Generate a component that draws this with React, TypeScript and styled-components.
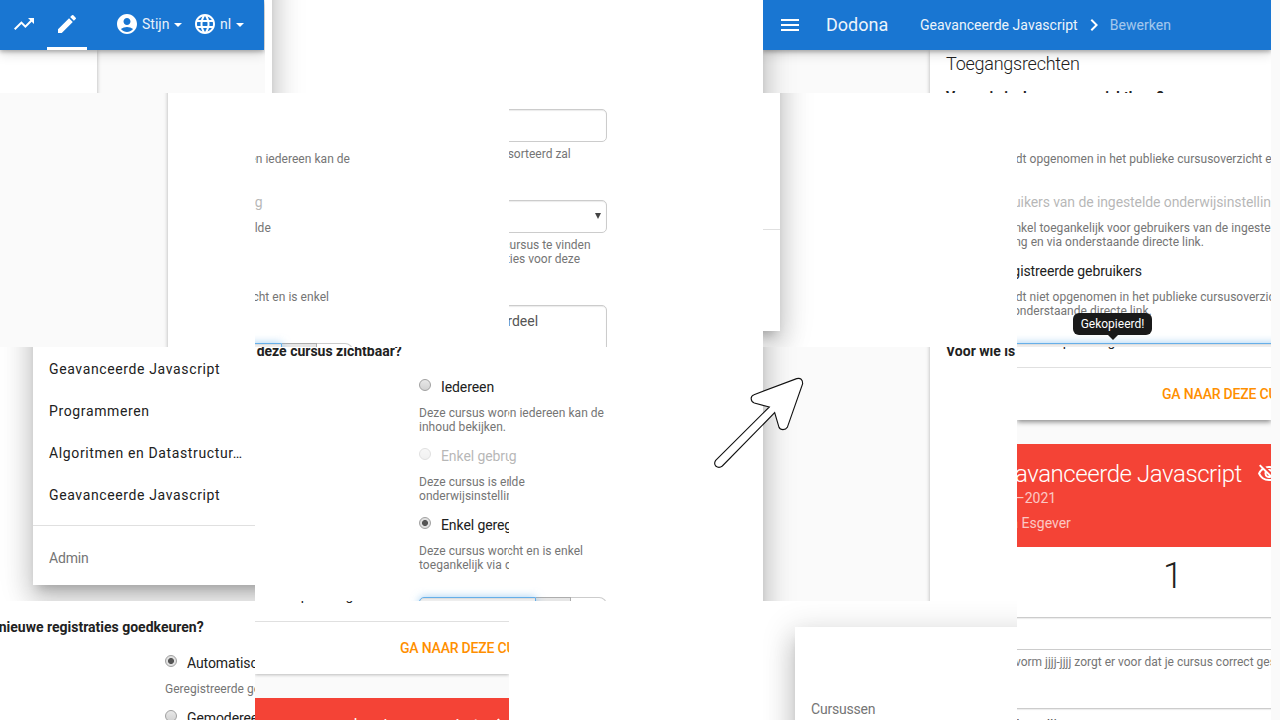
import React from "react";
import styled, { createGlobalStyle, css } from "styled-components";
import {
  MdAccountCircle,
  MdChevronRight,
  MdEdit,
  MdLanguage,
  MdMenu,
  MdOutlineVisibilityOff,
  MdTrendingUp,
} from "react-icons/md";

const Global = createGlobalStyle`
  *, *::before, *::after { box-sizing: border-box; }
  body {
    margin: 0;
    overflow: hidden;
    background: #fff;
    color: #212121;
    font: 14px/20px Roboto, "Liberation Sans", sans-serif;
  }
`;

const drawerShadow =
  "0 8px 10px -5px rgba(0,0,0,.2), 0 16px 24px 2px rgba(0,0,0,.14), 0 6px 30px 5px rgba(0,0,0,.12)";

const Page = styled.main`
  position: relative;
  width: 1280px;
  height: 720px;
  overflow: hidden;
  display: flex;
`;
const Mosaic = styled.div`
  width: 1271px;
  flex: none;
  display: flex;
  flex-direction: column;
`;
const Gutter = styled.div`
  flex: 1;
  background: #fafafa;
`;
const Row = styled.div<{ $h: number }>`
  display: flex;
  flex: none;
  height: ${(p) => p.$h}px;
`;
const Tile = styled.section<{ $w?: number; $grey?: boolean }>`
  flex: none;
  width: ${(p) => p.$w ?? 254}px;
  height: 100%;
  overflow: hidden;
  white-space: nowrap;
  background: ${(p) => (p.$grey ? "#fafafa" : "#fff")};
`;
const Bar = styled.nav`
  position: relative;
  display: flex;
  align-items: center;
  height: 50px;
  background: #1976d2;
  color: #fff;
  box-shadow: 0 2px 4px rgba(0, 0, 0, 0.26), 0 3px 12px rgba(0, 0, 0, 0.16);
  svg { flex: none; }
`;
const StatusBar = styled(Bar)`
  width: 264px;
  padding: 0 0 2px 12px;
`;
const ActiveTab = styled.span`
  display: flex;
  align-items: center;
  justify-content: center;
  width: 40px;
  height: 50px;
  margin: 2px 28px 0 11px;
  border-bottom: 3px solid #fff;
`;
const MenuLabel = styled.span<{ $w: number }>`
  width: ${(p) => p.$w}px;
  margin-left: 3px;
  opacity: 0.9;
`;
const Caret = styled.span`
  border: 4px solid transparent;
  border-top-color: #fff;
  border-bottom: 0;
  margin: 2px 11px 0 0;
`;
const Brand = styled.span`
  width: 94px;
  margin-left: 24px;
  font-size: 18px;
  opacity: 0.92;
`;
const Crumb = styled.span<{ $faded?: boolean }>`
  letter-spacing: 0.04px;
  opacity: ${(p) => (p.$faded ? 0.6 : 0.92)};
`;
const Below = styled.div`
  display: flex;
  height: 300px;
`;
const DrawerEdge = styled.div<{ $line?: boolean; $h?: number; $w?: number }>`
  flex: none;
  width: ${(p) => 200 + (p.$w ?? 0)}px;
  height: ${(p) => (p.$h ?? 600) + 120}px;
  margin: -120px 0 0 -200px;
  background: #fff;
  box-shadow: ${drawerShadow};
  padding-top: ${(p) => (p.$line ? 256 : 0)}px;
`;
const Rule = styled.div`
  height: 1px;
  background: #e0e0e0;
`;
const Card = styled.div<{ $ml?: number; $w?: number; $mt?: number }>`
  flex: none;
  width: ${(p) => p.$w ?? 500}px;
  margin-left: ${(p) => p.$ml ?? 0}px;
  margin-top: ${(p) => p.$mt ?? 0}px;
  height: 400px;
  background: #fff;
  box-shadow: 0 1px 4px rgba(0, 0, 0, 0.3);
`;
const CardHeading = styled.h2`
  margin: 2px 0 20px 16px;
  font-size: 18px;
  font-weight: 300;
  line-height: 24px;
  letter-spacing: -0.25px;
`;
const FieldLabel = styled.div<{ $ml?: number }>`
  margin-left: ${(p) => p.$ml ?? 0}px;
  font-weight: 700;
`;

/* A wide form panel, of which each tile shows one slice. */
const Slice = styled.div<{ $shift: number; $top?: number }>`
  width: 860px;
  margin-left: ${(p) => -p.$shift}px;
  padding: ${(p) => p.$top ?? 0}px 0 0 183px;
`;
const Fields = styled.div`
  width: 442px;
  margin-left: 235px;
`;
const Option = styled.label<{ $off?: boolean }>`
  display: flex;
  align-items: center;
  gap: 10px;
  height: 20px;
  margin-bottom: 9px;
  letter-spacing: -0.09px;
  opacity: ${(p) => (p.$off ? 0.32 : 1)};
`;
const Radio = styled.span<{ $on?: boolean }>`
  width: 12px;
  height: 12px;
  margin-top: -4px;
  border: 1px solid #a0a0a0;
  border-radius: 50%;
  background: ${(p) =>
    p.$on
      ? "radial-gradient(circle, #555 0 2.6px, #e0e0e0 3.4px)"
      : "linear-gradient(#e8e8e8, #d2d2d2)"};
`;
const Help = styled.p<{ $gap?: number; $tight?: boolean }>`
  margin: 0 0 ${(p) => p.$gap ?? 12}px;
  font-size: 12px;
  line-height: 14px;
  letter-spacing: ${(p) => (p.$tight ? 0 : 0.038)}px;
  color: #757575;
`;
const box = css`
  border: 1px solid #ccc;
  box-shadow: inset 0 1px 1px rgba(0, 0, 0, 0.08);
  border-radius: 5px;
  background: #fff;
  color: #555;
`;
const Field = styled.div`
  ${box}
  display: flex;
  align-items: center;
  height: 33px;
  padding: 0 5px 0 12px;
  margin-bottom: 5px;
`;
const Arrow = styled.span`
  width: 0;
  height: 0;
  margin: -2px 0 0 auto;
  border: 3px solid transparent;
  border-top: 6px solid #444;
  border-bottom: 0;
`;
const Area = styled.div`
  ${box}
  height: 90px;
  padding: 5px 14px;
  overflow: hidden;
`;
const LinkGroup = styled.div`
  display: flex;
  height: 33px;
  margin-top: 25px;
`;
const LinkInput = styled.div`
  position: relative;
  flex: none;
  width: 371px;
  background: #eee;
  border: 1px solid #66afe9;
  border-radius: 5px 0 0 5px;
  box-shadow: inset 0 1px 1px rgba(0, 0, 0, 0.08), 0 0 8px rgba(102, 175, 233, 0.6);
`;
const CopyButton = styled.div`
  width: 35px;
  background: #e6e6e6;
  border: solid #adadad;
  border-width: 1px 1px 1px 0;
`;
const ResetButton = styled.div`
  flex: 1;
  border: 1px solid #ccc;
  border-left: 0;
  border-radius: 0 8px 5px 0;
`;

function Access({ shift }: { shift: number }) {
  return (
    <Slice $shift={shift}>
      <FieldLabel style={{ marginTop: -6, marginBottom: 16 }}>Voor wie is deze cursus zichtbaar?</FieldLabel>
      <Fields>
        <Option><Radio />Iedereen</Option>
        <Help>
          Deze cursus wordt opgenomen in het publieke cursusoverzicht en iedereen kan de<br />
          inhoud bekijken.
        </Help>
        <Option $off><Radio />Enkel gebruikers van de ingestelde onderwijsinstelling</Option>
        <Help>
          Deze cursus is enkel toegankelijk voor gebruikers van de ingestelde<br />
          onderwijsinstelling en via onderstaande directe link.
        </Help>
        <Option><Radio $on />Enkel geregistreerde gebruikers</Option>
        <Help>
          Deze cursus wordt niet opgenomen in het publieke cursusoverzicht en is enkel<br />
          toegankelijk via onderstaande directe link.
        </Help>
        <LinkGroup><LinkInput /><CopyButton /><ResetButton /></LinkGroup>
      </Fields>
    </Slice>
  );
}

function Details({ shift }: { shift: number }) {
  return (
    <Slice $shift={shift} $top={16}>
      <Fields>
        <Field />
        <Help $gap={39} $tight>
          Een jaartal in de vorm jjjj-jjjj zorgt er voor dat je cursus correct gesorteerd zal
        </Help>
        <Field>Universiteit, Instelling<Arrow /></Field>
        <Help $gap={39} $tight>
          De onderwijsinstelling helpt alle andere gebruikers om de juiste cursus te vinden<br />
          en kan later ook gebruikt worden voor het beheer van de registraties voor deze
        </Help>
        <Area>Deze cursus over Javascript is een verplicht vakonderdeel</Area>
      </Fields>
    </Slice>
  );
}

const Foot = styled.div<{ $deep?: boolean }>`
  height: 73px;
  background: #fff;
  box-shadow: ${(p) =>
    p.$deep ? "0 2px 5px rgba(0,0,0,.45)" : "0 1px 3px rgba(0,0,0,.25)"};
`;
const Cut = styled.div`
  display: flex;
  align-items: flex-start;
  height: 20px;
  padding-left: 36px;
  span { margin-top: -16px; }
`;
const Action = styled.div`
  padding: 16px 0 0 145px;
  color: #ff8f00;
  font-weight: 500;
  letter-spacing: -0.2px;
`;
const Banner = styled.div`
  height: 103px;
  margin-top: 24px;
  padding-top: 15px;
  background: #f44336;
  color: #fff;
`;
const BannerTitle = styled.div`
  display: flex;
  align-items: center;
  gap: 15px;
  height: 29px;
  margin-left: -30px;
  font-size: 24px;
  font-weight: 300;
  letter-spacing: -0.43px;
  svg { flex: none; }
`;
const BannerText = styled.div<{ $ml: number }>`
  margin: 0 0 5px ${(p) => p.$ml}px;
  opacity: 0.7;
`;
const Count = styled.div`
  padding: 8px 0 0 146px;
  font-size: 36px;
  font-weight: 300;
  line-height: 42px;
`;
const Panel = styled.div`
  background: #fafafa;
`;
const Results = styled.div`
  height: 60px;
  background: #fff;
`;

function Summary({ deep }: { deep?: boolean }) {
  return (
    <Panel>
      <Foot $deep={deep}>
        <Cut><span>Oplossing</span></Cut>
        <Rule />
        <Action>GA NAAR DEZE CURSUS</Action>
      </Foot>
      <Banner>
        <BannerTitle>Geavanceerde Javascript<MdOutlineVisibilityOff size={24} /></BannerTitle>
        <BannerText $ml={-33}>2020–2021</BannerText>
        <BannerText $ml={-31}>Dana Esgever</BannerText>
      </Banner>
      <Results><Count>1</Count></Results>
    </Panel>
  );
}

const CourseMenu = styled.div`
  width: 300px;
  height: 338px;
  margin: -100px 0 0 33px;
  padding-top: 101px;
  background: #fff;
  box-shadow: ${drawerShadow};
`;
const Course = styled.div`
  height: 42px;
  padding-left: 16px;
  line-height: 42px;
  letter-spacing: 0.63px;
`;
const Section = styled.div`
  padding: 22px 0 0 16px;
  color: #757575;
  letter-spacing: -0.2px;
`;
const SideDrawer = styled.div`
  height: 400px;
  margin: 26px -100px 0 32px;
  padding-top: 50px;
  background: #fff;
  box-shadow: ${drawerShadow};
`;
const Tooltip = styled.div`
  position: absolute;
  left: 1073px;
  top: 313px;
  width: 79px;
  height: 22px;
  border-radius: 6px;
  background: #1a1a1a;
  color: #fff;
  font-size: 12px;
  line-height: 22px;
  text-align: center;
  &::after {
    content: "";
    position: absolute;
    left: 35px;
    top: 22px;
    border: 5px solid transparent;
    border-top-color: #1a1a1a;
    border-bottom: 0;
  }
`;
const Pointer = styled.svg`
  position: absolute;
  left: 690px;
  top: 350px;
  width: 330px;
  height: 130px;
`;

export default function App() {
  return (
    <Page>
      <Global />
      <Mosaic>
        <Row $h={93}>
          <Tile $w={265} $grey>
            <StatusBar>
              <MdTrendingUp size={24} />
              <ActiveTab><MdEdit size={24} /></ActiveTab>
              <MdAccountCircle size={24} />
              <MenuLabel $w={32}>Stijn</MenuLabel><Caret />
              <MdLanguage size={24} />
              <MenuLabel $w={16}>nl</MenuLabel><Caret />
            </StatusBar>
            <Below><Card $w={97} /></Below>
          </Tile>
          <Tile $w={7} />
          <Tile $w={491}><Below><DrawerEdge /></Below></Tile>
          <Tile $w={508} $grey>
            <Bar>
              <MdMenu size={24} style={{ marginLeft: 15 }} />
              <Brand>Dodona</Brand>
              <Crumb>Geavanceerde Javascript</Crumb>
              <MdChevronRight size={24} style={{ margin: "0 4px" }} />
              <Crumb $faded>Bewerken</Crumb>
            </Bar>
            <Below>
              <DrawerEdge />
              <Card $ml={167}>
                <CardHeading>Toegangsrechten</CardHeading>
                <FieldLabel $ml={16} style={{ marginTop: -9 }}>Voor wie is deze cursus zichtbaar?</FieldLabel>
              </Card>
            </Below>
          </Tile>
        </Row>
        <Row $h={254}>
          <Tile $w={255} $grey><Card $ml={168} $mt={-10} /></Tile>
          <Tile><Access shift={762} /></Tile>
          <Tile><Details shift={762} /></Tile>
          <Tile><DrawerEdge $w={17} $h={238} $line><Rule /></DrawerEdge></Tile>
          <Tile><Access shift={508} /></Tile>
        </Row>
        <Row $h={254}>
          <Tile $w={255}>
            <CourseMenu>
              <Course>Geavanceerde Javascript</Course>
              <Course>Programmeren</Course>
              <Course>Algoritmen en Datastructur…</Course>
              <Course>Geavanceerde Javascript</Course>
              <Rule style={{ marginTop: 9 }} />
              <Section>Admin</Section>
            </CourseMenu>
          </Tile>
          <Tile><Access shift={254} /></Tile>
          <Tile><Access shift={762} /></Tile>
          <Tile $grey>
            <Below>
              <DrawerEdge />
              <Card $ml={167} $mt={-10}><FieldLabel $ml={16} style={{ paddingTop: 4 }}>Voor wie is</FieldLabel></Card>
            </Below>
          </Tile>
          <Tile><Summary deep /></Tile>
        </Row>
        <Row $h={119}>
          <Tile $w={255}>
            <Slice $shift={253} $top={16}>
              <FieldLabel $ml={4} style={{ marginBottom: 16 }}>Hoe wil je nieuwe registraties goedkeuren?</FieldLabel>
              <Fields>
                <Option><Radio $on />Automatisch</Option>
                <Help>Geregistreerde gebruikers</Help>
                <Option><Radio />Gemodereerd</Option>
              </Fields>
            </Slice>
          </Tile>
          <Tile><Summary /></Tile>
          <Tile />
          <Tile><SideDrawer><Section>Cursussen</Section></SideDrawer></Tile>
          <Tile><Details shift={508} /></Tile>
        </Row>
      </Mosaic>
      <Gutter />
      <Tooltip>Gekopieerd!</Tooltip>
      <Pointer viewBox="0 0 990 390">
        <path
          d="M77 331L238 171L193 159C181 155 180 138 192 134L320 86Q338 82 338 101L292 232Q288 239 279 239Q270 239 267 232L254 188L97 348Q87 356 77 348Q71 340 77 331Z"
          fill="#fff"
          stroke="#111"
          strokeWidth="3.4"
        />
      </Pointer>
    </Page>
  );
}
